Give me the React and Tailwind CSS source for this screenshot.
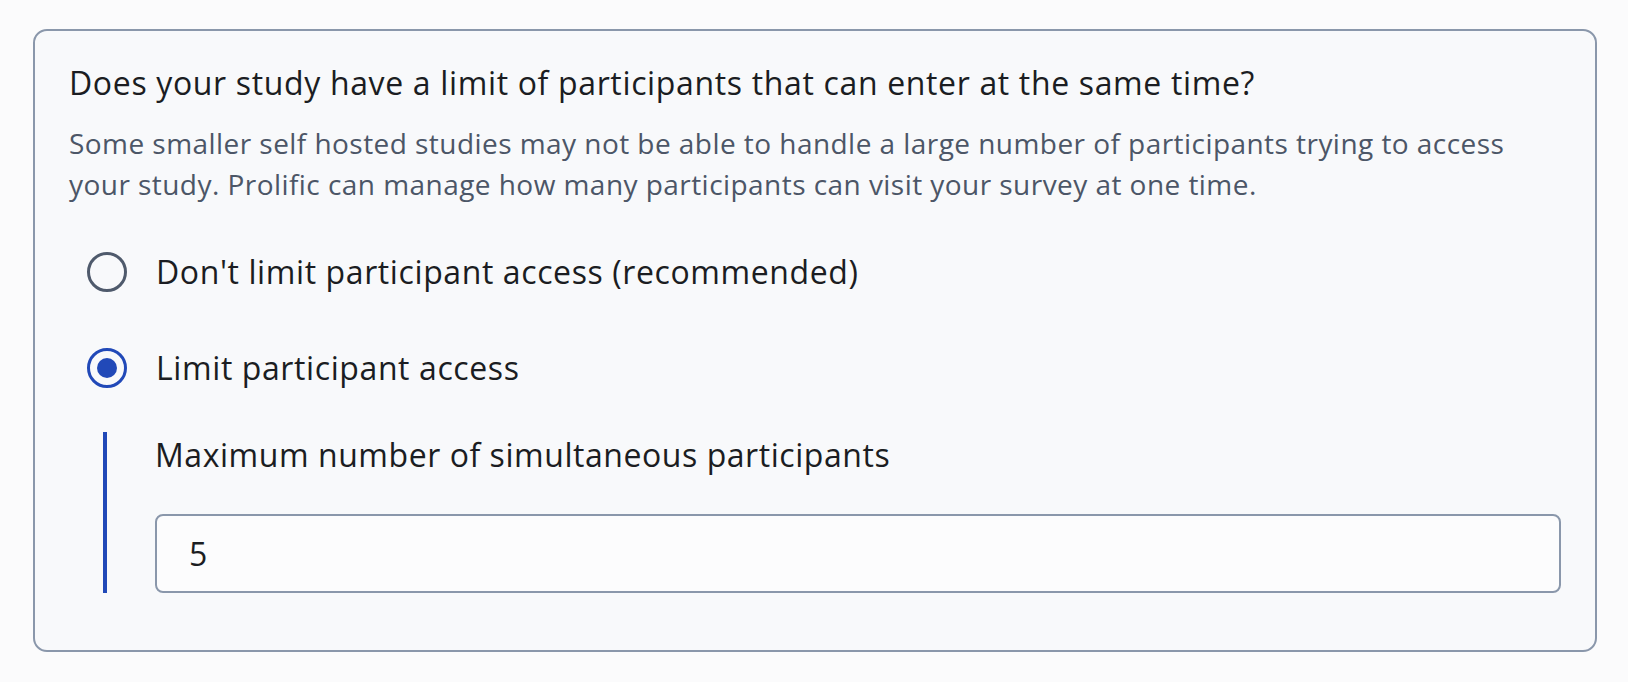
import React, { useState } from 'react';

const Radio = ({ checked, label, onClick }) => (
  <label className="flex h-[40px] cursor-pointer items-center" onClick={onClick}>
    <span
      className={
        checked
          ? 'flex h-[40px] w-[40px] shrink-0 items-center justify-center rounded-full border-[3.5px] border-[#2149b8]'
          : 'flex h-[40px] w-[40px] shrink-0 items-center justify-center rounded-full border-[3.5px] border-[#4f5a6c]'
      }
    >
      {checked && <span className="h-[20px] w-[20px] rounded-full bg-[#2149b8]" />}
    </span>
    <span className="ml-[29px] text-[32px] leading-[40px] tracking-[0.6px] text-[#1b1d22]">{label}</span>
  </label>
);

const App = () => {
  const [limit, setLimit] = useState(true);
  const [max, setMax] = useState('5');

  return (
    <div className="min-h-screen bg-[#fbfbfc] pl-[33px] pr-[31px] pt-[29px] font-['Open_Sans',sans-serif]">
      <div className="h-[623px] rounded-[14px] border-2 border-[#8a97ab] bg-[#f8f9fb] px-[34px] pt-[32px]">
        {/* Question */}
        <h2 className="text-[32px] leading-[40px] tracking-[0.65px] text-[#1b1d22]">
          Does your study have a limit of participants that can enter at the same time?
        </h2>
        <p className="mt-[20px] text-[28px] leading-[41px] tracking-[0.45px] text-[#4c5667]">
          Some smaller self hosted studies may not be able to handle a large number of participants trying to access
          your study. Prolific can manage how many participants can visit your survey at one time.
        </p>

        {/* Options */}
        <div className="mt-[47px] flex flex-col gap-[56px] pl-[18px]">
          <Radio
            checked={!limit}
            label="Don't limit participant access (recommended)"
            onClick={() => setLimit(false)}
          />
          <Radio checked={limit} label="Limit participant access" onClick={() => setLimit(true)} />
        </div>

        {limit && (
          <div className="ml-[34px] mt-[44px] border-l-4 border-[#2149b8] pl-[48px] pt-[3px]">
            <label className="block text-[32px] leading-[40px] tracking-[0.55px] text-[#1b1d22]">
              Maximum number of simultaneous participants
            </label>
            <input
              value={max}
              onChange={(e) => setMax(e.target.value)}
              className="mt-[39px] block h-[79px] w-full rounded-[8px] border-2 border-[#8a97ab] bg-[#fcfcfd] pl-[32px] text-[32px] text-[#1b1d22] outline-none"
            />
          </div>
        )}
      </div>
    </div>
  );
};

export default App;
